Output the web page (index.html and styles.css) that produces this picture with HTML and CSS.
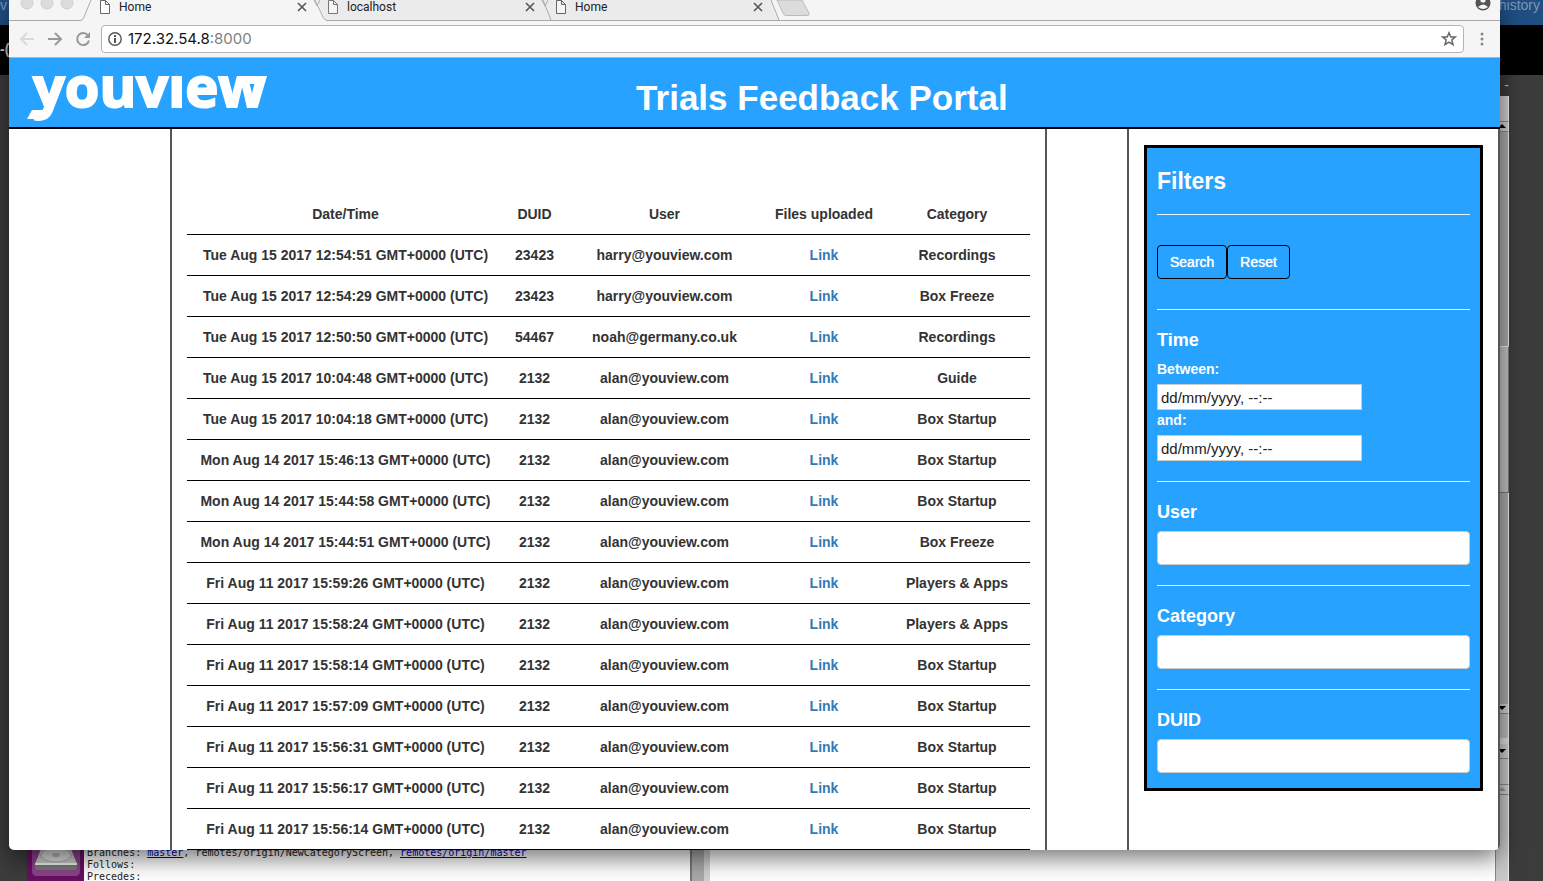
FILE: index.html
```html
<!DOCTYPE html>
<html lang="en">
<head>
<meta charset="utf-8">
<title>Home</title>
<link rel="stylesheet" href="styles.css">
</head>
<body>
<div class="desktop">
  <div class="page-behind">
    <div class="blue-bar"><span>v</span><span>history</span></div>
    <div class="black-bar"><span>-(</span></div>
    <div class="dim-area"></div>
  </div>

  <div class="dock">
    <svg width="58" height="32" viewBox="0 0 58 32">
      <rect width="58" height="32" fill="#671060"/>
      <path d="M5 0V22Q5 27 10 27H48Q53 27 53 22V0Z" fill="#8b438b"/>
      <path d="M14 0H44L50 15H8Z" fill="#c9c9c9"/>
      <ellipse cx="29" cy="6" rx="15" ry="7" fill="#dedede" stroke="#aaa"/>
      <ellipse cx="29" cy="6" rx="4" ry="2" fill="#b5b5b5"/>
      <path d="M8 14H50V19Q50 21 47 21H11Q8 21 8 19Z" fill="#777"/>
      <path d="M8 14H50V16H8Z" fill="#eee"/>
    </svg>
  </div>

  <div class="git-window">
    <div class="git-title">-</div>
    <div class="git-main">
      <div class="git-text">
        <div>Branches: <a href="#">master</a>, remotes/origin/NewCategoryScreen, <a href="#">remotes/origin/master</a></div>
        <div>Follows:</div>
        <div>Precedes:</div>
      </div>
      <div class="git-divider"></div>
      <div class="git-pane"></div>
      <div class="git-scroll">
        <div class="sc sc-panel"></div>
        <div class="sc sc-arrow"><svg width="8" height="7"><path d="M0 5L4 1L8 5Z"/></svg></div>
        <div class="sc sc-track"></div>
        <div class="sc sc-thumb"></div>
        <div class="sc sc-track-low"></div>
        <div class="sc sc-arrow"><svg width="8" height="7"><path d="M0 1H8L4 5Z"/></svg></div>
        <div class="sc sc-field"></div>
        <div class="sc sc-arrow sc-tall"><svg width="8" height="7"><path d="M0 1H8L4 5Z"/></svg></div>
        <div class="sc sc-plain"></div>
        <div class="sc sc-arrow sc-off"><svg width="8" height="7"><path d="M0 5L4 1L8 5Z"/></svg></div>
        <div class="sc sc-rest"></div>
      </div>
    </div>
  </div>

  <div class="window">
    <div class="tabs">
      <div class="lights"><svg width="71" height="20"><g fill="#dcdcdc" stroke="#cfcfcf"><circle cx="18" cy="3" r="6"/><circle cx="38" cy="3" r="6"/><circle cx="58" cy="3" r="6"/></g></svg></div>
      <svg class="edge" width="14" height="21"><path d="M0 20.5L2 20Q3 19 4 17L11 0" fill="none" stroke="#aaa"/></svg>
      <div class="tab active">
        <svg class="doc" width="12" height="16"><path d="M1.5 .5H6.500L10.500 4.500V13.500H1.500ZM6.500 .500V4.500H10.500" fill="#fff" stroke="#666"/></svg>
        <span>Home</span>
        <button aria-label="Close tab"><svg width="10" height="10"><path d="M1 1L9 9M9 1L1 9" stroke="#555" stroke-width="1.600"/></svg></button>
      </div>
      <svg class="edge" width="14" height="21"><path d="M4 0L11 17Q12 20 14 20.5V0Z" fill="#ebebeb"/><path d="M1 0L4 6L7 0M2 0L10 17Q11 20 14 20.5" fill="none" stroke="#aaa"/></svg>
      <div class="tab">
        <svg class="doc" width="12" height="16"><path d="M1.500 .500H6.500L10.500 4.500V13.500H1.500ZM6.500 .500V4.500H10.500" fill="#f5f5f5" stroke="#777"/></svg>
        <span>localhost</span>
        <button aria-label="Close tab"><svg width="10" height="10"><path d="M1 1L9 9M9 1L1 9" stroke="#555" stroke-width="1.600"/></svg></button>
      </div>
      <svg class="edge" width="14" height="21"><path d="M0 0H14V20H0Z" fill="#ebebeb"/><path d="M1 0L4 6L7 0M2 0L10 20M0 20.500H14" fill="none" stroke="#aaa"/></svg>
      <div class="tab">
        <svg class="doc" width="12" height="16"><path d="M1.500 .500H6.500L10.500 4.500V13.500H1.500ZM6.500 .500V4.500H10.500" fill="#f5f5f5" stroke="#666"/></svg>
        <span>Home</span>
        <button aria-label="Close tab"><svg width="10" height="10"><path d="M1 1L9 9M9 1L1 9" stroke="#555" stroke-width="1.600"/></svg></button>
      </div>
      <svg class="edge" width="44" height="21"><path d="M0 0H2L10 20H0Z" fill="#ebebeb"/><path d="M2 0L10 20M0 20.500H44" fill="none" stroke="#aaa"/><path d="M8 0H33L40 13Q41 15.500 38 15.500H17Q15 15.500 14 13Z" fill="#dcdcdc" stroke="#bbb"/></svg>
      <div class="profile"><svg width="18" height="20"><circle cx="9" cy="3" r="7.500" fill="#555"/><circle cx="9" cy="0" r="2.600" fill="#f5f5f5"/><path d="M4 7Q9 2 14 7Q9 11 4 7Z" fill="#f5f5f5"/></svg></div>
    </div>

    <div class="toolbar">
      <button aria-label="Back"><svg width="16" height="16" fill="none" stroke="#dadada" stroke-width="2"><path d="M15 8H2M8 2L2 8L8 14"/></svg></button>
      <button aria-label="Forward"><svg width="16" height="16" fill="none" stroke="#999" stroke-width="2"><path d="M1 8H14M8 2L14 8L8 14"/></svg></button>
      <button aria-label="Reload"><svg width="16" height="16"><path d="M13 4.500A6 6 0 1 0 14 9.500" fill="none" stroke="#999" stroke-width="2"/><path d="M15 1V7H9Z" fill="#999"/></svg></button>
      <div class="address">
        <svg width="14" height="14"><circle cx="7" cy="7" r="6.200" fill="none" stroke="#555" stroke-width="1.400"/><path d="M7 3V5M7 6V11" stroke="#555" stroke-width="2"/></svg>
        <div class="url">172.32.54.8<span>:8000</span></div>
        <button aria-label="Bookmark"><svg width="16" height="16"><path d="M8 1.800L9.800 6H14.200L10.800 9L12 13.700L8 11.200L4 13.700L5.200 9L1.800 6H6.200Z" fill="none" stroke="#666" stroke-width="1.500"/></svg></button>
      </div>
      <button aria-label="Menu"><svg width="16" height="16" fill="#888"><circle cx="8" cy="3" r="1.500"/><circle cx="8" cy="8" r="1.500"/><circle cx="8" cy="13" r="1.500"/></svg></button>
    </div>

    <header class="banner">
      <svg class="logo" width="250" height="69" viewBox="0 0 250 69">
        <text class="logo-text" x="6" y="49">youview</text>
        <rect x="120" y="0" width="50" height="16" fill="#27a3ff"/>
        <path d="M5 52H24L20 58Q17 61 13 61H0Z M214 18H234L230 26H214Z" fill="#fff"/>
      </svg>
      <h1>Trials Feedback Portal</h1>
    </header>

    <main class="page">
      <section class="results">
        <table>
          <colgroup><col class="c-date"><col class="c-duid"><col class="c-user"><col class="c-files"><col class="c-cat"></colgroup>
          <thead><tr><th>Date/Time</th><th>DUID</th><th>User</th><th>Files uploaded</th><th>Category</th></tr></thead>
          <tbody>
            <tr><td>Tue Aug 15 2017 12:54:51 GMT+0000 (UTC)</td><td>23423</td><td>harry@youview.com</td><td><a href="#">Link</a></td><td>Recordings</td></tr>
            <tr><td>Tue Aug 15 2017 12:54:29 GMT+0000 (UTC)</td><td>23423</td><td>harry@youview.com</td><td><a href="#">Link</a></td><td>Box Freeze</td></tr>
            <tr><td>Tue Aug 15 2017 12:50:50 GMT+0000 (UTC)</td><td>54467</td><td>noah@germany.co.uk</td><td><a href="#">Link</a></td><td>Recordings</td></tr>
            <tr><td>Tue Aug 15 2017 10:04:48 GMT+0000 (UTC)</td><td>2132</td><td>alan@youview.com</td><td><a href="#">Link</a></td><td>Guide</td></tr>
            <tr><td>Tue Aug 15 2017 10:04:18 GMT+0000 (UTC)</td><td>2132</td><td>alan@youview.com</td><td><a href="#">Link</a></td><td>Box Startup</td></tr>
            <tr><td>Mon Aug 14 2017 15:46:13 GMT+0000 (UTC)</td><td>2132</td><td>alan@youview.com</td><td><a href="#">Link</a></td><td>Box Startup</td></tr>
            <tr><td>Mon Aug 14 2017 15:44:58 GMT+0000 (UTC)</td><td>2132</td><td>alan@youview.com</td><td><a href="#">Link</a></td><td>Box Startup</td></tr>
            <tr><td>Mon Aug 14 2017 15:44:51 GMT+0000 (UTC)</td><td>2132</td><td>alan@youview.com</td><td><a href="#">Link</a></td><td>Box Freeze</td></tr>
            <tr><td>Fri Aug 11 2017 15:59:26 GMT+0000 (UTC)</td><td>2132</td><td>alan@youview.com</td><td><a href="#">Link</a></td><td>Players &amp; Apps</td></tr>
            <tr><td>Fri Aug 11 2017 15:58:24 GMT+0000 (UTC)</td><td>2132</td><td>alan@youview.com</td><td><a href="#">Link</a></td><td>Players &amp; Apps</td></tr>
            <tr><td>Fri Aug 11 2017 15:58:14 GMT+0000 (UTC)</td><td>2132</td><td>alan@youview.com</td><td><a href="#">Link</a></td><td>Box Startup</td></tr>
            <tr><td>Fri Aug 11 2017 15:57:09 GMT+0000 (UTC)</td><td>2132</td><td>alan@youview.com</td><td><a href="#">Link</a></td><td>Box Startup</td></tr>
            <tr><td>Fri Aug 11 2017 15:56:31 GMT+0000 (UTC)</td><td>2132</td><td>alan@youview.com</td><td><a href="#">Link</a></td><td>Box Startup</td></tr>
            <tr><td>Fri Aug 11 2017 15:56:17 GMT+0000 (UTC)</td><td>2132</td><td>alan@youview.com</td><td><a href="#">Link</a></td><td>Box Startup</td></tr>
            <tr><td>Fri Aug 11 2017 15:56:14 GMT+0000 (UTC)</td><td>2132</td><td>alan@youview.com</td><td><a href="#">Link</a></td><td>Box Startup</td></tr>
          </tbody>
        </table>
      </section>

      <aside class="side">
        <form class="filters">
          <h2>Filters</h2>
          <hr>
          <div class="actions"><button type="button">Search</button><button type="reset">Reset</button></div>
          <hr>
          <h3>Time</h3>
          <label class="when" for="from">Between:</label>
          <input class="date" id="from" type="text" value="dd/mm/yyyy, --:--">
          <label class="when" for="to">and:</label>
          <input class="date" id="to" type="text" value="dd/mm/yyyy, --:--">
          <hr>
          <h3><label for="user">User</label></h3>
          <input class="field" id="user" type="text">
          <hr>
          <h3><label for="category">Category</label></h3>
          <input class="field" id="category" type="text">
          <hr>
          <h3><label for="duid">DUID</label></h3>
          <input class="field" id="duid" type="text">
        </form>
      </aside>
    </main>
  </div>
</div>
</body>
</html>
```
FILE: styles.css
```css
* { box-sizing: border-box; }
body { margin: 0; font-family: "Liberation Sans", Arial, sans-serif; font-size: 14px; line-height: 20px; color: #333; }
button { padding: 0; border: 0; background: none; font: inherit; color: inherit; }
svg { display: block; flex: none; }
h1, h2, h3 { margin: 0; font-weight: bold; }

.desktop { position: relative; height: 100vh; overflow: hidden; background: #3c3c3c; }

/* Dimmed page at the very back */
.page-behind { display: flex; flex-direction: column; height: 100%; }
.blue-bar { display: flex; justify-content: space-between; height: 25px; background: #1f4f83; color: #7d96b5; line-height: 10px; padding-right: 3px; }
.black-bar { height: 50px; background: #000; color: #ccc; font-weight: bold; line-height: 48px; }
.dim-area { flex: 1; background: #3c3c3c; }

.dock { position: absolute; left: 27px; bottom: 0; }

/* Repository browser behind the main window */
.git-window { position: absolute; left: 84px; right: 34px; top: 75px; bottom: 0; display: flex; flex-direction: column; background: #fff; }
.git-title { height: 21px; background: #3b3936; color: #bbb; text-align: right; }
.git-main { flex: 1; display: grid; grid-template-columns: 606fr 20px 785fr 14px; min-height: 0; }
.git-text { align-self: end; padding-left: 3px; font-family: "DejaVu Sans Mono", monospace; font-size: 10px; line-height: 12px; color: #222; white-space: nowrap; margin-bottom: -2px; }
.git-text a { color: #00c; }
.git-divider { background: #aaa; border-left: 2px solid #777; border-right: 6px solid #d0d0d0; }
.git-pane { background: #fff; }
.git-scroll { display: flex; flex-direction: column; background: #c9c9c9; border-left: 1px solid #888; }
.sc { border-right: 1px solid #eee; background: #aaa; }
.sc-panel { height: 26px; background: #ccc; border-bottom: 1px solid #888; }
.sc-arrow { height: 10px; background: #ccc; border-bottom: 1px solid #888; display: flex; justify-content: flex-end; align-items: center; padding-right: 2px; }
.sc-track { height: 214px; }
.sc-thumb { height: 147px; background: #c2c2c2; border: 1px solid #777; border-top-color: #eee; }
.sc-track-low { height: 211px; }
.sc-field { height: 30px; background: #bbb; border-bottom: 6px solid #ddd; }
.sc-tall { height: 15px; }
.sc-plain { height: 26px; background: #c9c9c9; border-bottom: 1px solid #888; }
.sc-off { fill: #999; }
.sc-rest { flex: 1; background: #c9c9c9; }

/* Browser window */
.window { position: absolute; left: 9px; right: 43px; top: 0; bottom: 31px; display: flex; flex-direction: column; overflow: hidden; background: #fff; border-radius: 0 0 5px 5px; box-shadow: 0 8px 24px rgba(0, 0, 0, .55); }

.tabs { display: flex; height: 21px; background: #f5f5f5; font-family: Roboto, sans-serif; font-size: 12px; line-height: 14px; color: #222; }
.lights { border-bottom: 1px solid #aaa; }
.tab { display: flex; align-items: flex-start; gap: 8px; width: 214px; background: #ebebeb; border-bottom: 1px solid #aaa; }
.tab.active { background: none; border: 0; width: 219px; padding-left: 5px; }
.tab span { flex: 1; }
.tab button { padding: 2px 6px 0 0; }
.profile { flex: 1; display: flex; justify-content: flex-end; padding-right: 8px; border-bottom: 1px solid #aaa; }

.toolbar { display: flex; align-items: center; gap: 12px; height: 37px; padding: 0 10px; background: #f5f5f5; border-bottom: 1px solid #b4b4b4; }
.address { flex: 1; display: flex; align-items: center; gap: 6px; height: 28px; margin: 0 -2px; padding: 0 6px; background: #fff; border: 1px solid #b4b4b4; border-radius: 4px; }
.url { flex: 1; font-family: Inter, sans-serif; font-size: 15px; color: #111; }
.url span { color: #808080; }

.banner { display: grid; grid-template-columns: 628fr auto 493fr; height: 71px; background: #27a3ff; border-bottom: 2px solid #000; color: #fff; }
.logo { margin-left: 18px; }
.logo-text { font-family: "Open Sans", sans-serif; font-weight: 700; font-size: 56px; fill: #fff; stroke: #fff; stroke-width: 2px; }
.banner h1 { padding-top: 20px; font-size: 35px; line-height: 40px; white-space: nowrap; }

.page { flex: 1; display: grid; grid-template-columns: 877fr 80fr 371fr; min-height: 0; padding-left: 161px; border-right: 2px solid #54565b; }
.results { padding: 65px 15px 0; border-left: 2px solid #54565b; border-right: 2px solid #54565b; }
.results table { width: 100%; border-collapse: separate; border-spacing: 0; table-layout: fixed; font-weight: bold; text-align: center; white-space: nowrap; }
.results th, .results td { padding: 10px 0; border-bottom: 1px solid #000; }
.results a { color: #337ab7; text-decoration: none; }
.c-date { width: 317px; }
.c-duid { width: 61px; }
.c-user { width: 199px; }
.c-files { width: 120px; }

.side { grid-column: 3; padding: 16px 15px 0; border-left: 2px solid #54565b; }
.filters { padding: 20px 10px 15px; background: #27a3ff; border: 3px solid #000; color: #fff; }
.filters h2 { font-size: 23px; line-height: 26px; }
.filters hr { height: 1px; margin: 20px 0; border: 0; background: #e8f4ff; }
.filters h3 { margin: 0 0 9px; font-size: 18px; line-height: 20px; }
.actions { display: flex; padding: 10px 0; }
.actions button { height: 34px; padding: 0 12px; border: 1px solid #000; border-radius: 4px; text-shadow: 0 0 1px #fff; }
.when { display: block; font-weight: bold; line-height: 20px; margin-bottom: 5px; }
.date { display: block; width: 205px; height: 26px; padding: 0 3px; border: 1px solid #ccc; background: #fff; font: inherit; font-size: 15px; color: #222; }
.field { display: block; width: 100%; height: 34px; padding: 6px 12px; border: 1px solid #ccc; border-radius: 4px; background: #fff; font: inherit; }
```
